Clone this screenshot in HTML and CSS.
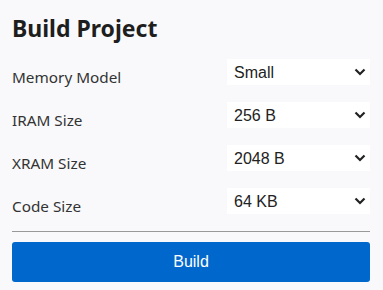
FILE: index.html
```html
<!DOCTYPE html>
<html lang="en">
<head>
    <meta charset="UTF-8">
    <meta name="viewport" content="width=device-width, initial-scale=1.0">
    <title>Build Project</title>
    <link rel="stylesheet" href="styles.css">
</head>
<body>

<div class="build-panel">
    <h2>Build Project</h2>

    <div class="field">
        <label for="memModel">Memory Model</label>
        <div class="select-wrap">
            <select id="memModel">
                <option>Small</option>
                <option>Medium</option>
                <option>Large</option>
            </select>
            <svg class="chevron" width="12" height="8" viewBox="0 0 12 8"><path d="M1.5 1.5 L6 6 L10.5 1.5" fill="none" stroke="#222" stroke-width="2.2"/></svg>
        </div>
    </div>

    <div class="field">
        <label for="iramSize">IRAM Size</label>
        <div class="select-wrap">
            <select id="iramSize">
                <option>256 B</option>
                <option>128 B</option>
            </select>
            <svg class="chevron" width="12" height="8" viewBox="0 0 12 8"><path d="M1.5 1.5 L6 6 L10.5 1.5" fill="none" stroke="#222" stroke-width="2.2"/></svg>
        </div>
    </div>

    <div class="field">
        <label for="xramSize">XRAM Size</label>
        <div class="select-wrap">
            <select id="xramSize">
                <option>2048 B</option>
                <option>1024 B</option>
                <option>4096 B</option>
            </select>
            <svg class="chevron" width="12" height="8" viewBox="0 0 12 8"><path d="M1.5 1.5 L6 6 L10.5 1.5" fill="none" stroke="#222" stroke-width="2.2"/></svg>
        </div>
    </div>

    <div class="field">
        <label for="codeSize">Code Size</label>
        <div class="select-wrap">
            <select id="codeSize">
                <option>64 KB</option>
                <option>32 KB</option>
            </select>
            <svg class="chevron" width="12" height="8" viewBox="0 0 12 8"><path d="M1.5 1.5 L6 6 L10.5 1.5" fill="none" stroke="#222" stroke-width="2.2"/></svg>
        </div>
    </div>

    <hr>

    <button class="build-btn">Build</button>
</div>

</body>
</html>
```

FILE: styles.css
```css
body {
    margin: 0;
    background-color: #f9f9fb;
    font-family: "Noto Sans", sans-serif;
    color: #222;
}
.build-panel {
    padding: 12px 13px 0 12px;
}
.build-panel h2 {
    margin: 0 0 15px 0;
    font-size: 23px;
    line-height: 32px;
    font-weight: bold;
    color: #1e1e1e;
}
.field {
    display: flex;
    justify-content: space-between;
    align-items: flex-start;
    height: 43px;
}
.field label {
    font-size: 15.3px;
    color: #333;
    padding-top: 7px;
    line-height: 22px;
}
.select-wrap {
    position: relative;
    width: 143px;
    height: 26px;
}
.select-wrap select {
    -webkit-appearance: none;
    appearance: none;
    width: 100%;
    height: 26px;
    border: none;
    border-radius: 0;
    background-color: #fff;
    font-family: "Liberation Sans", Arial, sans-serif;
    font-size: 16px;
    color: #222;
    padding: 0 0 0 7px;
    outline: none;
}
.chevron {
    position: absolute;
    right: 4px;
    top: 9px;
    pointer-events: none;
}
hr {
    margin: 0;
    border: none;
    border-top: 1px solid #999;
}
.build-btn {
    display: block;
    width: 100%;
    height: 40px;
    margin-top: 10px;
    border: none;
    border-radius: 3px;
    background-color: #0067cd;
    color: #fff;
    font-family: "Liberation Sans", Arial, sans-serif;
    font-size: 16px;
}
```
